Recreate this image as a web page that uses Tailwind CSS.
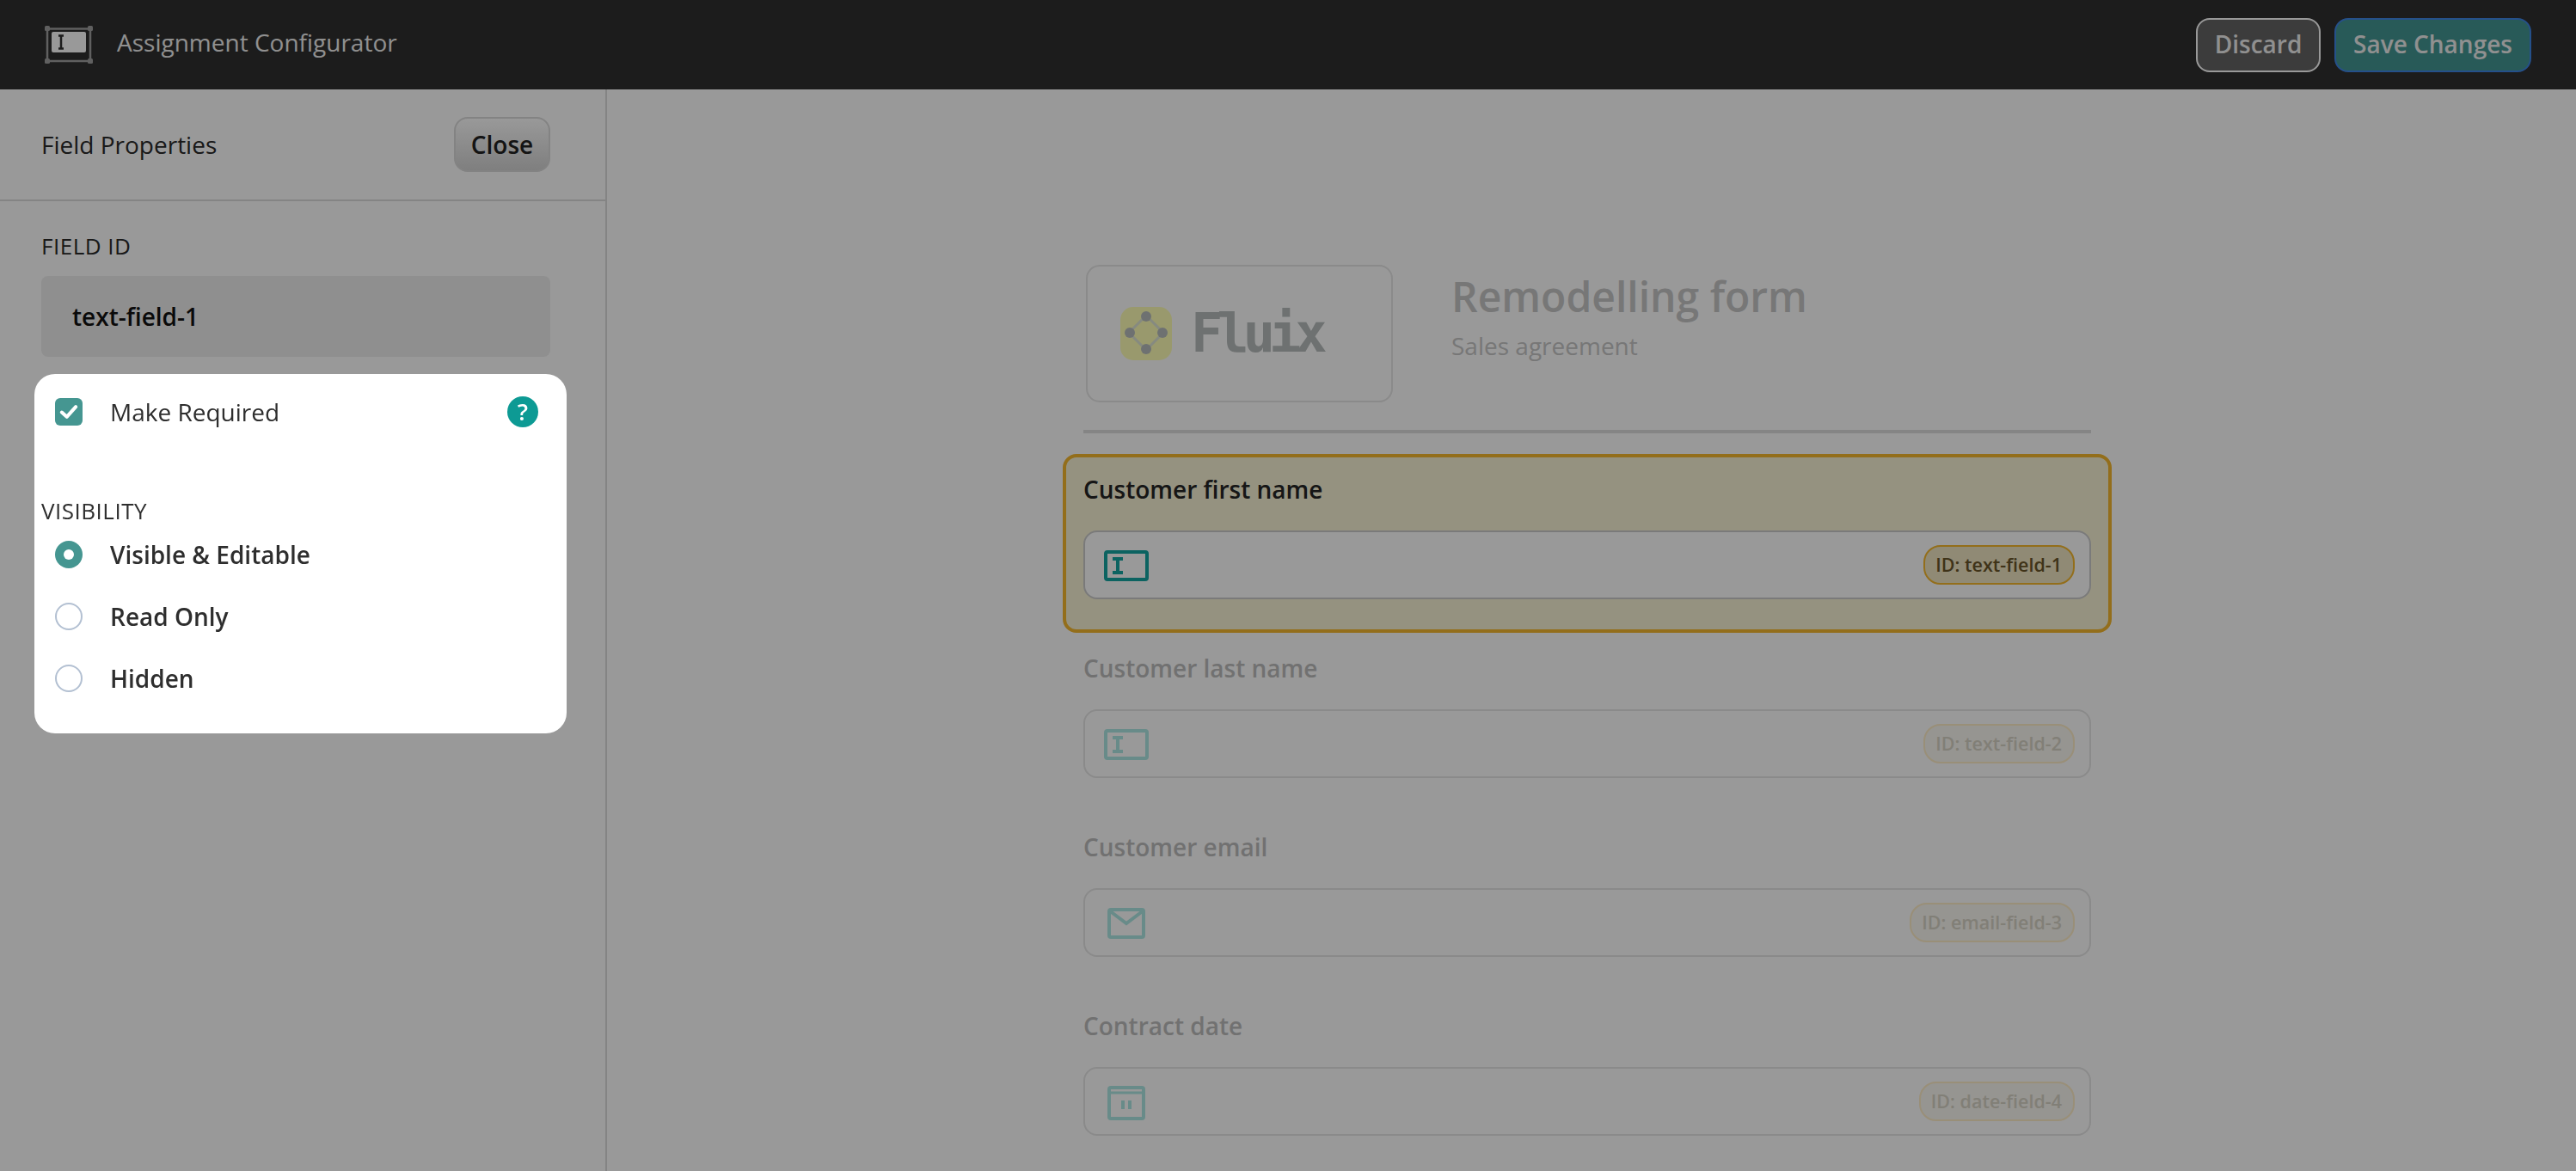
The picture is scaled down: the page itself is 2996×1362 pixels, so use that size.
<!DOCTYPE html>
<html lang="en">
<head>
    <meta charset="UTF-8">
    <meta name="viewport" content="width=device-width, initial-scale=1.0">
    <title>Assignment Configurator</title>
    <script src="https://cdn.jsdelivr.net/npm/@tailwindcss/browser@4"></script>
</head>
<body class="h-screen overflow-hidden bg-white font-['Open_Sans',sans-serif] text-[28px] text-[#2e2e2e]">
    <!-- Top bar -->
    <header class="h-[104px] bg-[#2f2f2f] flex items-center justify-between pl-[52px] pr-[52px]">
        <div class="flex items-center gap-[28px] pb-[7px]">
            <svg class="w-[56px] h-[44px] mt-[7px]" viewBox="0 0 56 44">
                <path d="M3 3.500H53V41H3Z" fill="none" stroke="#a0a0a0" stroke-width="2.500"/>
                <rect x="0" y="0" width="6" height="6" rx="1.500" fill="#a0a0a0"/><rect x="50" y="0" width="6" height="6" rx="1.500" fill="#a0a0a0"/>
                <rect x="0" y="38" width="6" height="6" rx="1.500" fill="#a0a0a0"/><rect x="50" y="38" width="6" height="6" rx="1.500" fill="#a0a0a0"/>
                <rect x="8" y="7" width="40" height="24" rx="2" fill="#ffffff"/>
                <path d="M16 11.500H22M19 11.500V26.500M16 26.500H22" stroke="#2f2f2f" stroke-width="2.500" fill="none"/>
            </svg>
            <span class="text-[#f0f0f0] font-normal">Assignment Configurator</span>
        </div>
        <div class="flex items-center gap-4">
            <button class="h-[63px] w-[145px] pb-[3px] rounded-2xl border-2 border-white bg-[#646464] text-[#f0f0f0] font-semibold">Discard</button>
            <button class="h-[63px] w-[229px] pb-[3px] rounded-2xl border-2 border-[#3f85e6] bg-[#449693] text-[#f0f0f0] font-semibold">Save Changes</button>
        </div>
    </header>

    <div class="flex h-[1258px]">
        <!-- Field properties sidebar -->
        <aside class="w-[706px] shrink-0 border-r-2 border-[#dcdcdc]">
            <div class="h-[130px] border-b-2 border-[#dcdcdc] flex items-center justify-between pl-12 pr-[64px] pb-[1px] text-[#2a2a2a]">
                <span class="font-normal">Field Properties</span>
                <button class="h-[64px] w-[112px] rounded-2xl border-2 border-[#dadada] bg-gradient-to-b from-white to-[#d4d4d4] font-semibold text-[#222]">Close</button>
            </div>
            <div class="pt-[36px] px-12 pr-[64px]">
                <div class="text-[26px] leading-[32px] font-medium tracking-[0.5px] text-[#2a2a2a]">FIELD ID</div>
                <div class="mt-[19px] h-[94px] rounded-lg bg-[#eeeeee] flex items-center pl-9 font-semibold text-[#111]">text-field-1</div>
            </div>
            <!-- Highlighted card, sits over the dim layer -->
            <section class="relative z-20 mt-[20px] ml-[40px] w-[619px] h-[418px] rounded-3xl bg-white pt-[28px]">
                <div class="flex items-center pl-6 pr-[33px] h-[32px]">
                    <span class="w-8 h-8 rounded-md bg-[#459691] flex items-center justify-center">
                        <svg viewBox="0 0 24 24" class="w-7 h-7" fill="none" stroke="#fff" stroke-width="3.500" stroke-linecap="round" stroke-linejoin="round"><path d="M5 12.500L10 17L19 7"/></svg>
                    </span>
                    <span class="ml-[32px] flex-1 font-normal">Make Required</span>
                    <span class="w-9 h-9 rounded-full bg-[#0d9a94] text-white flex items-center justify-center text-[27px] font-semibold">?</span>
                </div>
                <div class="mt-[83px] ml-2 text-[26px] leading-[32px] font-medium tracking-[0.5px]">VISIBILITY</div>
                <div class="mt-[19px] pl-6 flex flex-col gap-10">
                    <label class="flex items-center h-8 font-semibold">
                        <span class="w-8 h-8 rounded-full bg-[#459691] flex items-center justify-center"><span class="w-3 h-3 rounded-full bg-white"></span></span>
                        <span class="ml-8">Visible &amp; Editable</span>
                    </label>
                    <label class="flex items-center h-8 font-semibold">
                        <span class="w-8 h-8 rounded-full border-2 border-[#b3c0d2]"></span>
                        <span class="ml-8">Read Only</span>
                    </label>
                    <label class="flex items-center h-8 font-semibold">
                        <span class="w-8 h-8 rounded-full border-2 border-[#b3c0d2]"></span>
                        <span class="ml-8">Hidden</span>
                    </label>
                </div>
            </section>
        </aside>

        <!-- Form preview -->
        <main class="flex-1 pl-[554px] pt-[204px]">
            <div class="w-[1172px]">
                <div class="flex gap-[68px]">
                    <div class="ml-[3px] w-[357px] h-[160px] rounded-2xl border-2 border-[#e6e6e6] flex items-center pl-[38px] gap-[22px]">
                        <svg viewBox="0 0 60 62" class="w-[60px] h-[62px] shrink-0">
                            <rect width="60" height="62" rx="15" fill="#ffffb6"/>
                            <path d="M30 10L50 30L30 50L10 30Z" fill="none" stroke="#dfe6d5" stroke-width="3"/>
                            <circle cx="30" cy="11" r="6" fill="#b8bdbd"/><circle cx="11" cy="30" r="6" fill="#b8bdbd"/><circle cx="49" cy="30" r="6" fill="#b8bdbd"/><circle cx="30" cy="49" r="6" fill="#b8bdbd"/>
                        </svg>
                        <span class="font-['DejaVu_Sans_Mono',monospace] font-bold text-[62px] leading-none tracking-[-7px] text-[#b8bdbd]">Fluix</span>
                    </div>
                    <div class="pt-[7px]">
                        <div class="text-[48px] leading-[60px] font-semibold text-[#c6c6c6]">Remodelling form</div>
                        <div class="mt-[9px] leading-[36px] text-[#c6c6c6]">Sales agreement</div>
                    </div>
                </div>
                <div class="mt-[32px] h-1 bg-[#dedede]"></div>

                <div class="mt-[24px]">
                    <div class="-mx-6 h-[208px] border-4 rounded-2xl border-[#f5b82e] bg-[#f8f3d6] px-5 pt-[17px]">
                        <div class="h-[40px] leading-[40px] font-semibold text-[#252525]">Customer first name</div>
                        <div class="h-[80px] mt-[28px] rounded-2xl border-2 border-[#cccccc] bg-white flex items-center justify-between pl-[22px] pr-[17px]">
                            <svg viewBox="0 0 52 36" class="w-[52px] h-[36px] mt-[2px]" fill="none" stroke="#14a5a2" stroke-width="4"><rect x="2" y="2" width="48" height="32" rx="2"/><path d="M10 10H22M16 10V26M10 26H22"/></svg>
                            <span class="h-[46px] flex items-center rounded-[20px] border-2 border-[#f5b82e] bg-[#f0e6c4] pl-[12px] pr-[13px] text-[21.500px] font-semibold text-[#6a5529]">ID: text-field-1</span>
                        </div>
                    </div>
                    <div class="-mx-6 h-[208px] border-4 border-transparent px-5 pt-[17px]">
                        <div class="h-[40px] leading-[40px] font-semibold text-[#bdbdbd]">Customer last name</div>
                        <div class="h-[80px] mt-[28px] rounded-2xl border-2 border-[#e6e6e6] flex items-center justify-between pl-[22px] pr-[17px]">
                            <svg viewBox="0 0 52 36" class="w-[52px] h-[36px] mt-[2px]" fill="none" stroke="#aee8e4" stroke-width="4"><rect x="2" y="2" width="48" height="32" rx="2"/><path d="M10 10H22M16 10V26M10 26H22"/></svg>
                            <span class="h-[46px] flex items-center rounded-[20px] border-2 border-[#ffeec8] bg-[#fbf8f2] pl-[12px] pr-[13px] text-[21.500px] font-semibold text-[#d8d4c6]">ID: text-field-2</span>
                        </div>
                    </div>
                    <div class="-mx-6 h-[208px] border-4 border-transparent px-5 pt-[17px]">
                        <div class="h-[40px] leading-[40px] font-semibold text-[#bdbdbd]">Customer email</div>
                        <div class="h-[80px] mt-[28px] rounded-2xl border-2 border-[#e6e6e6] flex items-center justify-between pl-[26px] pr-[17px]">
                            <svg viewBox="0 0 44 36" class="w-[44px] h-[36px] mt-[2px]" fill="none" stroke="#aee8e4" stroke-width="4"><rect x="2" y="2" width="40" height="32" rx="2"/><path d="M2 3L22 18L42 3"/></svg>
                            <span class="h-[46px] flex items-center rounded-[20px] border-2 border-[#ffeec8] bg-[#fbf8f2] pl-[12px] pr-[13px] text-[21.500px] font-semibold text-[#d8d4c6]">ID: email-field-3</span>
                        </div>
                    </div>
                    <div class="-mx-6 h-[208px] border-4 border-transparent px-5 pt-[17px]">
                        <div class="h-[40px] leading-[40px] font-semibold text-[#bdbdbd]">Contract date</div>
                        <div class="h-[80px] mt-[28px] rounded-2xl border-2 border-[#e6e6e6] flex items-center justify-between pl-[26px] pr-[17px]">
                            <svg viewBox="0 0 44 40" class="w-[44px] h-[40px] mt-[3px]" fill="none" stroke="#aee8e4" stroke-width="4"><rect x="2" y="2" width="40" height="36" rx="2"/><path d="M2 8H42" stroke-width="3"/><path d="M18 17V27M26 17V27"/></svg>
                            <span class="h-[46px] flex items-center rounded-[20px] border-2 border-[#ffeec8] bg-[#fbf8f2] pl-[12px] pr-[13px] text-[21.500px] font-semibold text-[#d8d4c6]">ID: date-field-4</span>
                        </div>
                    </div>
                </div>
            </div>
        </main>
    </div>

    <!-- Dim layer -->
    <div class="fixed inset-0 z-10 bg-black/40"></div>
</body>
</html>
